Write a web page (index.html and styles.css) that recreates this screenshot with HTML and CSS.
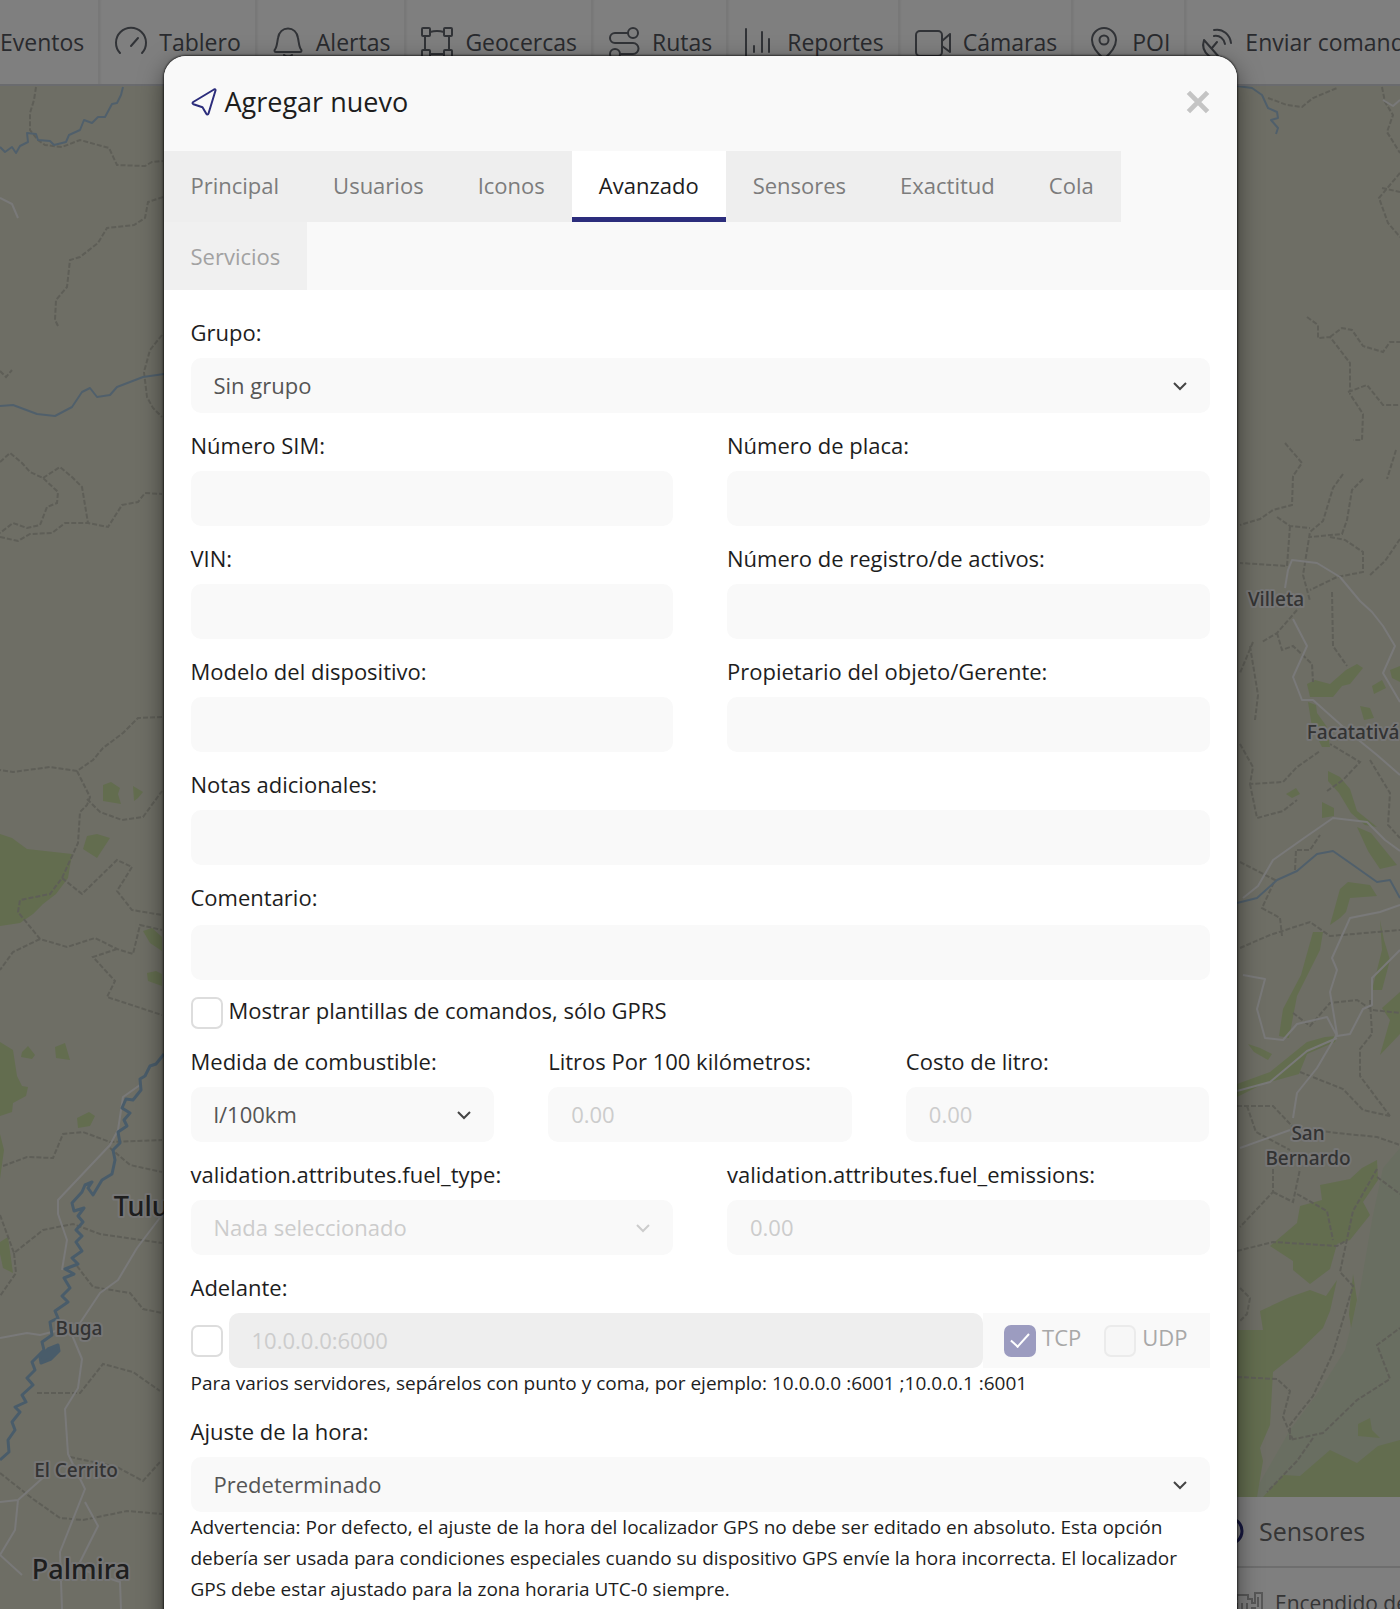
FILE: index.html
```html
<!DOCTYPE html>
<html lang="es">
<head>
<meta charset="utf-8">
<meta name="viewport" content="width=device-width, initial-scale=1">
<title>Agregar nuevo</title>
<link rel="stylesheet" href="styles.css">
</head>
<body>
<div class="app">
  <nav class="nav">
    <a class="nav-item nav-item--first" href="#eventos">Eventos</a>
    <a class="nav-item" href="#tablero">
      <svg class="nav-icon" viewBox="0 0 32 32"><path d="M5 27A15 15 0 1 1 27 27"/><path d="M16 20l7-8"/></svg>Tablero</a>
    <a class="nav-item" href="#alertas">
      <svg class="nav-icon" viewBox="0 0 32 32"><path d="M4 26c-1.500 0-2-1.500-1-2.500C5 21 5 17 6 12c1-6 5-9.500 10-9.500s9 3.500 10 9.500c1 5 1 9 3 11.500c1 1 .5 2.500-1 2.500z"/><path d="M12 29c2 2 6 2 8 0"/></svg>Alertas</a>
    <a class="nav-item" href="#geocercas">
      <svg class="nav-icon" viewBox="0 0 32 32"><rect x="1" y="2" width="8" height="8" rx="1"/><rect x="23" y="2" width="8" height="8" rx="1"/><rect x="1" y="24" width="8" height="8" rx="1"/><rect x="23" y="24" width="8" height="8" rx="1"/><path d="M9 6q7-2 14 0M9 28h14M4 10v14M28 10v14"/></svg>Geocercas</a>
    <a class="nav-item" href="#rutas">
      <svg class="nav-icon" viewBox="0 0 32 32"><circle cx="25" cy="7" r="5"/><circle cx="7" cy="28" r="5"/><path d="M20 7H7a5 5 0 0 0 0 10h18a5.500 5.500 0 0 1 0 11H12"/></svg>Rutas</a>
    <a class="nav-item" href="#reportes">
      <svg class="nav-icon" viewBox="0 0 32 32"><path d="M3 3v29M11 20v6M19 6v20M26 13v13"/></svg>Reportes</a>
    <a class="nav-item" href="#camaras">
      <svg class="nav-icon nav-icon--wide" viewBox="0 0 36 32"><rect x="1" y="5" width="26" height="25" rx="4"/><path d="M27 15l8-7v18l-8-6"/></svg>Cámaras</a>
    <a class="nav-item" href="#poi">
      <svg class="nav-icon" viewBox="0 0 32 32"><path d="M16 33C9 27 4 21 4 14a12 12 0 0 1 24 0c0 7-5 13-12 19z"/><circle cx="16" cy="14" r="4.500"/></svg>POI</a>
    <a class="nav-item" href="#comandos">
      <svg class="nav-icon" viewBox="0 0 32 32"><path d="M3 14c-2 6 0 12 5 16s8 2 10 1zM11 22l5-6M13 4c9-2 16 5 17 13M13 10c6-1 10 3 11 8"/></svg>Enviar comandos</a>
  </nav>

  <div class="map">
    <svg class="map-canvas" viewBox="0 86 1400 1523" preserveAspectRatio="xMidYMin slice" aria-hidden="true">
      <g class="map-hill">
        <path d="M1383 1168L1400 1148V1500H1250L1290 1430L1320 1390L1345 1350L1360 1290L1372 1220Z"/>
      </g>
      <g class="map-forest">
        <path d="M0 834L12 838L27 849L72 854L68 878L56 894L43 904L33 914L20 923L0 926Z"/>
        <path d="M103 785l8-3 9 6-2 6 3 10-18-3zM133 786l10 6-5 6-4 3zM87 836l10-2 13 4-13 20-14-9z"/>
        <path d="M143 931l9-3 10 9v14l-12-8zM147 973l9-2 6 3v12l-14-5zM22 1052l6-6 7 9-3 4-11-2zM55 1047l10-4 5 17-14-2z"/>
        <path d="M0 1042L13 1050L17 1076L22 1086L28 1087L26 1096L13 1103L12 1112L0 1116ZM0 1134l4 16-4 29zM0 1242l8-5 5 36-10-5-3-14zM77 1118l12-6 6 4-5 10-12 2z"/>
        <path d="M1307 684l8-4 15 4 16-14 11-6 6 4-13 16-8 2-9 11-23 0zM1308 702l8 3 1 8 10 14 3 20-8 0-10-20zM1372 686l10-6 4 8-12 6zM1360 706l10 2 4 10-10 2zM1390 670l10-4v16l-8-4z"/>
        <path d="M1328 771l12 6 10 12 7 22 20 16-12-2-14-12-12-20-11-12zM1357 827l14 6 26 32-17 4-12-18zM1322 802l12 6 0 8-12 2zM1286 794l10-6 4 6-8 4z"/>
        <path d="M1340 889l8-7 22 3 7 11-27 2-4 14-6 6-10 7zM1313 932l10 0-3 18-23 46-8 42-10-2 4-27 18-34zM1380 920l4 20 6 20-8 30-10 0 10-40z"/>
        <path d="M1237 1084L1270 1072L1307 1042L1325 1037L1337 1036L1335 1042L1307 1054L1299 1074L1263 1084L1237 1097ZM1248 1044l12 4 12 6-4 6-14-8z"/>
        <path d="M1400 992V1034L1380 1055L1390 1020L1382 1008Z"/>
        <path d="M1320 1185L1350 1179L1362 1168L1377 1160L1378 1180L1363 1202L1370 1215L1350 1240L1337 1244L1330 1269L1310 1284L1293 1270L1293 1261L1270 1246L1297 1223L1300 1206L1322 1200Z"/>
        <path d="M1260 1311L1290 1297L1310 1290L1326 1296L1337 1280L1330 1311L1323 1328L1297 1353L1273 1372L1270 1425L1260 1448L1263 1461L1257 1497H1230V1330H1263Z"/>
        <path d="M1263 1497L1283 1475L1300 1476L1330 1450L1357 1463L1378 1446L1400 1440V1497ZM1353 1274l4 26-6 28-2-14zM1358 1424l12-6 2 12 8 8-22-2z"/>
      </g>
      <g class="map-border">
        <path d="M36 87L34 100L30 113L30 130L38 140L45 145L62 147L80 140L109 148L117 165L145 166L152 162L163 161"/>
        <path d="M163 197L148 202L145 218L134 225L107 228L98 243L80 257L70 260L67 287L56 300L55 320L58 326M0 371l6 6 6-7"/>
        <path d="M162 335L150 350L144 372L147 397L153 408L162 417"/>
        <path d="M0 462L10 453L22 463L30 472L43 478L58 492L57 503L47 507L40 525L27 528L13 523L0 533M43 478L60 467L72 477L82 487L88 523"/>
        <path d="M0 537L18 541L30 534L52 533L65 523L88 523L108 527L122 505L138 502L145 493L162 494"/>
        <path d="M162 717L138 718L123 733L103 748L93 760L77 771L50 767L13 772L0 770M77 771L90 797L87 805L80 812L78 843L62 878L50 894L20 900L18 912L40 939L67 947L95 938L117 949L133 954L140 925L162 930"/>
        <path d="M87 799L100 812L122 820L143 817L162 791M62 878L82 894L117 860L132 867L117 891L132 910L162 915M40 939L13 952L0 970M117 949L93 957L115 981L107 997L162 1015"/>
        <path d="M3 1166L27 1157L53 1158L63 1134L83 1132L110 1142L162 1140M0 1215L14 1253L43 1230L73 1224L100 1234L162 1243M110 1148L130 1165L162 1172"/>
        <path d="M77 1266L93 1287L130 1293L143 1309L162 1313M37 1393L80 1393L103 1364L133 1372L160 1391M0 1473L33 1499L60 1518L83 1520L127 1511L162 1514M70 1457L117 1467L143 1481L160 1462M14 1253l2 20L0 1296"/>
        <path d="M1268 98L1287 105L1302 107L1313 98L1337 88M1382 87L1385 102L1393 115L1387 132L1400 153M1400 173L1379 198L1388 223L1400 237M1382 188L1400 192"/>
        <path d="M1307 317L1318 325L1318 338L1330 337L1350 363L1350 394L1363 414L1362 440L1353 440M1330 337L1342 328L1352 330L1363 346L1383 352L1390 342L1400 342M1348 392L1367 385L1383 405L1400 405"/>
        <path d="M1285 443L1302 463L1293 476L1292 505L1273 510L1260 519L1240 525M1343 474L1333 488L1323 521L1310 532L1303 575L1310 601M1363 479L1352 490L1347 520L1342 534L1310 537M1396 450L1387 479M1277 517L1290 526L1310 528M1290 526L1287 566L1240 563"/>
        <path d="M1330 537L1345 540L1363 552L1363 572L1337 577L1310 590M1400 539L1385 561L1370 575M1332 592L1333 646L1347 666M1297 610L1277 633L1262 642M1277 633L1282 650L1293 646L1312 664L1313 682M1253 642L1240 673M1250 646L1258 695L1255 720"/>
        <path d="M1240 744L1253 767L1250 784L1283 782L1297 767L1320 751M1250 784L1257 818L1283 811L1297 800M1327 791L1343 780L1360 762L1330 744M1370 760L1390 793L1388 825L1400 838M1295 870L1296 850L1310 850L1320 835M1240 862L1275 880L1262 908L1280 918L1282 936M1240 948L1270 935L1310 922L1330 936L1400 930"/>
        <path d="M1293 1013L1310 1026L1330 1003L1357 1000L1372 1010L1400 1013M1370 1000L1372 1034L1360 1049L1360 1076L1390 1116M1300 1072L1343 1089L1363 1110L1390 1116M1237 1106L1273 1106L1293 1127L1337 1133L1377 1137L1400 1145M1247 1106L1256 1132L1290 1150"/>
        <path d="M1273 1169L1273 1192L1240 1227M1273 1192L1293 1202L1300 1169M1297 1194L1327 1211L1333 1240M1237 1251L1273 1242L1337 1246L1347 1240M1377 1177L1400 1194M1377 1169L1353 1211L1340 1272L1353 1286L1333 1353L1313 1396L1290 1425L1290 1440L1323 1433L1357 1400L1390 1379L1377 1345L1400 1328M1237 1377L1277 1379L1290 1391L1283 1417L1293 1440M1313 1438L1297 1461L1267 1492M1240 1288l10 10-3 16-8 8"/>
      </g>
      <g class="map-road">
        <path d="M162 1215L137 1248L118 1280L100 1293L72 1335L82 1359L78 1388L65 1409L68 1454L85 1489L60 1552L62 1609M0 1338L27 1333L40 1335L60 1330M140 1085L123 1097L118 1130L110 1145L58 1200L58 1214L67 1240L62 1270M85 1502L98 1526L77 1568L120 1582L121 1609M0 1555L22 1575M0 1502L18 1500L45 1476M18 1500L15 1530L0 1555"/>
        <path d="M0 198l12 6 6 14M1383 100l10 6 7-6M1285 588L1288 570L1292 560L1317 563L1340 577L1360 601L1372 612L1383 626L1395 646L1383 673L1400 702"/>
        <path d="M1293 619L1307 646L1293 677L1302 700L1313 700L1350 733L1377 755L1400 775M1243 898L1258 886L1273 860L1307 836L1333 818L1367 822L1385 840L1400 851"/>
        <path d="M1400 905L1380 912L1350 918L1332 958L1337 970L1330 992L1337 1034L1317 1068L1297 1093L1293 1118M1243 975L1265 979L1257 1009L1265 1038L1283 1040L1297 1024L1327 1017L1337 1036L1350 1034L1363 1009L1372 1005L1372 978L1400 950M1237 1091L1270 1082L1307 1051L1337 1038M1240 1148L1290 1130"/>
      </g>
      <g class="map-river">
        <path d="M123 87L121 95L117 103L112 104L105 117L98 117L92 123L84 120L80 130L69 135L66 142L54 145L50 141L38 140L36 134L27 133L28 142L20 146L16 153L12 147L5 152L0 147"/>
        <path d="M0 406L13 405L37 414L55 416L72 407L82 392L90 388L97 397L110 395L117 387L130 382L143 377L164 374"/>
        <path d="M1237 86L1252 88L1262 95L1268 108L1277 112L1278 118L1271 120L1278 128L1276 134"/>
        <path d="M1237 903L1257 898L1277 880L1297 871L1317 854L1333 851L1353 865L1377 882L1390 880L1400 898"/>
      </g>
      <g class="map-river map-river--wide">
        <path d="M164 1054L156 1064L150 1066L145 1076L140 1079L141 1090L133 1100L126 1099L122 1108L130 1113L124 1120L127 1126L118 1132L120 1143L113 1150L115 1160L112 1174L102 1180L93 1195L88 1188L92 1182L85 1185L82 1192L72 1203L74 1211L84 1208L78 1216L83 1222L76 1230L82 1236L76 1242L82 1251L72 1258L78 1264L65 1269L74 1274L64 1278L70 1288L62 1296L68 1302L55 1311L58 1318L50 1322L52 1335L42 1342L44 1350L32 1362L35 1370L27 1378L33 1385L22 1395L26 1402L15 1407L20 1412L12 1422L15 1430L8 1440L9 1452L0 1460"/>
        <path class="map-lake" d="M40 1357l8-8 10-4 1 6-8 8-10 4z"/>
      </g>
      <g class="map-label">
        <text x="79" y="1335">Buga</text>
        <text x="76" y="1477">El Cerrito</text>
        <text x="1276" y="606">Villeta</text>
        <text x="1353" y="739">Facatativá</text>
        <text x="1308" y="1140">San</text>
        <text x="1308" y="1165">Bernardo</text>
      </g>
      <g class="map-label map-label--city">
        <text x="149" y="1216">Tuluá</text>
        <text x="81" y="1579">Palmira</text>
      </g>
    </svg>

    <aside class="widget">
      <h2 class="widget-title">
        <svg class="widget-title-icon" viewBox="0 0 30 30"><circle cx="15" cy="15" r="13"/></svg>Sensores</h2>
      <div class="widget-row">
        <svg class="widget-row-icon" viewBox="0 0 33 24"><path d="M2 22V8h5V4h11v4h4v4h3V2h7v20h-7v-5h-3v5zM28 6v10M7 12v6M12 12v6M17 12v6"/></svg>Encendido del motor</div>
    </aside>
  </div>
</div>

<div class="overlay">
  <section class="modal" role="dialog" aria-labelledby="modal-title">
    <header class="modal-header">
      <svg class="modal-icon" viewBox="0 0 26 28"><path d="M23 1.500c1-.5 1.700 0 1.500 1L17.500 25.500c-.4 1.300-1.600 1.300-2.200.2L11.500 19.200L2.500 16.300c-1.300-.5-1.300-1.500-.3-2.300z"/></svg>
      <h1 class="modal-title" id="modal-title">Agregar nuevo</h1>
      <button class="modal-close" type="button" aria-label="Cerrar"><svg viewBox="0 0 20 20"><path d="M2 2l16 16M18 2L2 18"/></svg></button>
    </header>

    <nav class="tabs">
      <a class="tab" href="#principal">Principal</a>
      <a class="tab" href="#usuarios">Usuarios</a>
      <a class="tab" href="#iconos">Iconos</a>
      <a class="tab tab--active" href="#avanzado" aria-current="page">Avanzado</a>
      <a class="tab" href="#sensores">Sensores</a>
      <a class="tab" href="#exactitud">Exactitud</a>
      <a class="tab" href="#cola">Cola</a>
      <a class="tab tab--disabled" href="#servicios">Servicios</a>
    </nav>

    <form class="form">
      <div class="field">
        <label for="group">Grupo:</label>
        <div class="select">
          <select class="control" id="group"><option>Sin grupo</option></select>
          <svg class="chevron" viewBox="0 0 14 10"><path d="M1 2l6 6 6-6"/></svg>
        </div>
      </div>

      <div class="row">
        <div class="field"><label for="sim">Número SIM:</label><input class="control" id="sim" type="text"></div>
        <div class="field"><label for="plate">Número de placa:</label><input class="control" id="plate" type="text"></div>
      </div>
      <div class="row">
        <div class="field"><label for="vin">VIN:</label><input class="control" id="vin" type="text"></div>
        <div class="field"><label for="registration">Número de registro/de activos:</label><input class="control" id="registration" type="text"></div>
      </div>
      <div class="row">
        <div class="field"><label for="model">Modelo del dispositivo:</label><input class="control" id="model" type="text"></div>
        <div class="field"><label for="owner">Propietario del objeto/Gerente:</label><input class="control" id="owner" type="text"></div>
      </div>

      <div class="field"><label for="notes">Notas adicionales:</label><input class="control" id="notes" type="text"></div>
      <div class="field field--multiline"><label for="comment">Comentario:</label><textarea class="control" id="comment" rows="1"></textarea></div>

      <label class="check"><input type="checkbox"><span>Mostrar plantillas de comandos, sólo GPRS</span></label>

      <div class="row">
        <div class="field">
          <label for="fuel-measure">Medida de combustible:</label>
          <div class="select">
            <select class="control" id="fuel-measure"><option>l/100km</option></select>
            <svg class="chevron" viewBox="0 0 14 10"><path d="M1 2l6 6 6-6"/></svg>
          </div>
        </div>
        <div class="field"><label for="fuel-quantity">Litros Por 100 kilómetros:</label><input class="control" id="fuel-quantity" type="text" placeholder="0.00"></div>
        <div class="field"><label for="fuel-price">Costo de litro:</label><input class="control" id="fuel-price" type="text" placeholder="0.00"></div>
      </div>
      <div class="row">
        <div class="field">
          <label for="fuel-type">validation.attributes.fuel_type:</label>
          <div class="select select--empty">
            <select class="control" id="fuel-type"><option>Nada seleccionado</option></select>
            <svg class="chevron" viewBox="0 0 14 10"><path d="M1 2l6 6 6-6"/></svg>
          </div>
        </div>
        <div class="field"><label for="fuel-emissions">validation.attributes.fuel_emissions:</label><input class="control" id="fuel-emissions" type="text" placeholder="0.00"></div>
      </div>

      <div class="field">
        <label for="forward">Adelante:</label>
        <div>
          <div class="forward">
            <div class="check check--bare"><input type="checkbox" aria-label="Activar adelante"></div>
            <input class="control forward-host" id="forward" type="text" placeholder="10.0.0.0:6000" disabled>
            <div class="forward-protocols">
              <label class="check check--disabled"><input type="checkbox" checked disabled><span>TCP</span></label>
              <label class="check check--disabled"><input type="checkbox" disabled><span>UDP</span></label>
            </div>
          </div>
          <p class="help">Para varios servidores, sepárelos con punto y coma, por ejemplo: 10.0.0.0 :6001 ;10.0.0.1 :6001</p>
        </div>
      </div>

      <div class="field">
        <label for="timezone">Ajuste de la hora:</label>
        <div>
          <div class="select">
            <select class="control" id="timezone"><option>Predeterminado</option></select>
            <svg class="chevron" viewBox="0 0 14 10"><path d="M1 2l6 6 6-6"/></svg>
          </div>
          <p class="help">Advertencia: Por defecto, el ajuste de la hora del localizador GPS no debe ser editado en absoluto. Esta opción debería ser usada para condiciones especiales cuando su dispositivo GPS envíe la hora incorrecta. El localizador GPS debe estar ajustado para la zona horaria UTC-0 siempre.</p>
        </div>
      </div>
    </form>
  </section>
</div>
</body>
</html>
```

FILE: styles.css
```css
* {
  box-sizing: border-box;
}

body {
  margin: 0;
  font-family: "Open Sans", "Noto Sans", sans-serif;
  font-size: 22px;
  line-height: 30px;
  color: #1d1d1d;
}

svg {
  display: block;
  flex: none;
}

h1,
h2,
p {
  margin: 0;
  font-weight: 400;
}

/* Page behind the dialog */

.app {
  position: fixed;
  inset: 0;
  display: flex;
  flex-direction: column;
  overflow: hidden;
  background: #fff;
}

.nav {
  display: flex;
  flex: none;
  height: 84px;
  overflow: hidden;
  font-size: 23px;
}

.nav-item {
  display: flex;
  flex: none;
  align-items: center;
  gap: 12px;
  padding: 0 14px 0 16px;
  border-left: 1px solid #f0f0f0;
  box-shadow: inset 3px 0 3px -2px #e8e8e8;
  color: #52555c;
  text-decoration: none;
  white-space: nowrap;
}

.nav-item--first {
  padding-left: 0;
  border-left: 0;
  box-shadow: none;
}

.nav-icon {
  width: 32px;
  height: 32px;
  overflow: visible;
  fill: none;
  stroke: #62666e;
  stroke-width: 2;
  stroke-linecap: round;
  stroke-linejoin: round;
}

.nav-icon--wide {
  width: 36px;
}

.map {
  position: relative;
  flex: 1;
  min-height: 0;
  border-top: 2px solid #d4d6dc;
  background: #dcdcca;
}

.map-canvas {
  width: 100%;
  height: 100%;
}

.map-hill {
  fill: #d2dcc2;
}

.map-forest {
  fill: #c6da9e;
}

.map-border {
  fill: none;
  stroke: #bcbcae;
  stroke-width: 2;
  stroke-dasharray: 5 2;
}

.map-road {
  fill: none;
  stroke: #f2f2f2;
  stroke-width: 2;
  stroke-linejoin: round;
}

.map-river {
  fill: none;
  stroke: #a0bfd6;
  stroke-width: 2;
  stroke-linejoin: round;
}

.map-river--wide {
  stroke: #92b8d4;
  stroke-width: 3;
}

.map-lake {
  fill: #92b8d4;
}

.map-label {
  font-family: "Noto Sans", sans-serif;
  font-size: 19px;
  font-weight: 500;
  text-anchor: middle;
  fill: #666;
  stroke: #ececec;
  stroke-width: 4;
  stroke-linejoin: round;
  paint-order: stroke;
}

.map-label--city {
  font-size: 27px;
  fill: #3c3c3c;
}

.widget {
  position: absolute;
  right: 0;
  bottom: 0;
  width: 200px;
  height: 112px;
  overflow: hidden;
  background: #fff;
  color: #6a6a6a;
  white-space: nowrap;
}

.widget-title {
  display: flex;
  align-items: center;
  gap: 15px;
  height: 71px;
  padding: 0 0 2px 14px;
  border-bottom: 2px solid #dcdcdc;
  font-size: 25px;
}

.widget-title-icon {
  width: 30px;
  height: 30px;
  fill: none;
  stroke: #2f3080;
  stroke-width: 3;
}

.widget-row {
  display: flex;
  align-items: center;
  gap: 12px;
  height: 70px;
  padding-left: 30px;
  font-size: 21px;
}

.widget-row-icon {
  width: 33px;
  height: 24px;
  fill: none;
  stroke: #b0b0b0;
  stroke-width: 2;
}

/* Dialog */

.overlay {
  position: fixed;
  inset: 0;
  padding: 56px 11% 0;
  overflow-y: auto;
  scrollbar-width: none;
  background: rgba(0, 0, 0, 0.5);
}

.modal {
  max-width: 1073px;
  min-height: 100%;
  margin: 0 auto;
  overflow: hidden;
  border-radius: 22px 22px 0 0;
  background: #fff;
  box-shadow: 0 0 2px 1px rgba(0, 0, 0, 0.6), 0 8px 24px rgba(0, 0, 0, 0.5);
}

.modal-header {
  display: flex;
  align-items: center;
  gap: 8px;
  height: 95px;
  padding: 0 27px 4px;
  background: #f9f9f9;
}

.modal-icon {
  width: 26px;
  height: 28px;
  fill: none;
  stroke: #2c2d7c;
  stroke-width: 2;
  stroke-linejoin: round;
}

.modal-title {
  flex: 1;
  font-size: 27px;
  line-height: 36px;
}

.modal-close {
  padding: 0;
  border: 0;
  background: none;
}

.modal-close svg {
  width: 24px;
  height: 24px;
  fill: none;
  stroke: #c4c4c4;
  stroke-width: 4;
}

.tabs {
  display: flex;
  flex-wrap: wrap;
  background: #f9f9f9;
}

.tab {
  padding: 19px 27px;
  background: #eee;
  color: #7c7c7c;
  text-decoration: none;
}

.tab--active {
  padding-bottom: 17px;
  border-bottom: 5px solid #2c2d7c;
  background: #fff;
  color: #1d1d1d;
}

.tab--disabled {
  background: #f0f0f0;
  color: #a2a2a2;
}

.form {
  display: flex;
  flex-direction: column;
  gap: 17px;
  padding: 27px;
}

.row {
  display: grid;
  grid-auto-flow: column;
  grid-auto-columns: minmax(0, 1fr);
  gap: 54px;
}

.field {
  display: flex;
  flex-direction: column;
  gap: 11px;
}

.field--multiline {
  gap: 13px;
}

.control {
  display: block;
  width: 100%;
  height: 55px;
  margin: 0;
  padding: 0 23px 2px;
  border: 0;
  border-radius: 10px;
  background: #f9f9f9;
  color: #555;
  font: inherit;
  resize: none;
  appearance: none;
}

.control::placeholder {
  color: #ccc;
  opacity: 1;
}

textarea.control {
  padding: 12px 23px;
}

.select {
  position: relative;
}

.chevron {
  position: absolute;
  top: 23px;
  right: 23px;
  width: 14px;
  height: 10px;
  fill: none;
  stroke: #444;
  stroke-width: 2;
  pointer-events: none;
}

.select--empty .control {
  color: #ccc;
}

.select--empty .chevron {
  stroke: #ccc;
}

.check {
  display: flex;
  align-items: flex-start;
  gap: 6px;
  height: 32px;
  line-height: 26px;
}

.check input {
  display: grid;
  flex: none;
  place-items: center;
  width: 32px;
  height: 32px;
  margin: 0;
  border: 2px solid #ddd;
  border-radius: 7px;
  background: #fff;
  appearance: none;
}

.check input:checked {
  border-color: #9c9cc0;
  background: #9c9cc0;
}

.check input:checked::before {
  content: "";
  width: 16px;
  height: 8px;
  margin-bottom: 5px;
  border: solid #fff;
  border-width: 0 0 2px 2px;
  transform: rotate(-48deg);
}

.check--disabled {
  color: #a8a8a8;
  line-height: 24px;
}

.check--disabled input:not(:checked) {
  border-color: #ebebeb;
  background: #f7f7f7;
}

.forward {
  display: flex;
  align-items: center;
}

.check--bare {
  margin-right: 6px;
}

.forward-host {
  flex: 1;
  min-width: 0;
}

.forward-host:disabled {
  background: #eee;
}

.forward-protocols {
  display: flex;
  align-items: center;
  gap: 23px;
  height: 55px;
  padding: 0 22px 0 21px;
  background: #f9f9f9;
}

.help {
  font-size: 19px;
  line-height: 31px;
}
```
